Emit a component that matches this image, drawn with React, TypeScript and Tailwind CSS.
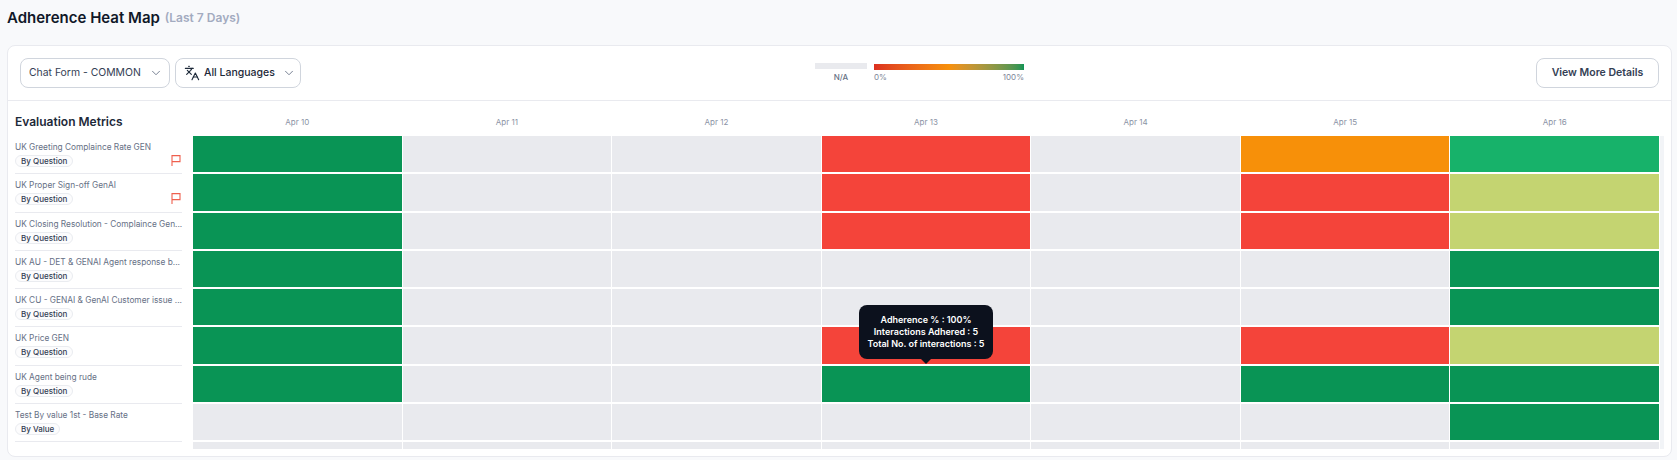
import { ChevronDown, Languages } from 'lucide-react'

type Cell = 'na' | 'green' | 'red' | 'orange' | 'lime' | 'mid'

const cellClass: Record<Cell, string> = {
  na: 'bg-[#e9eaee]',
  green: 'bg-[#099455]',
  red: 'bg-[#f4443a]',
  orange: 'bg-[#f79009]',
  lime: 'bg-[#c4d471]',
  mid: 'bg-[#17b26a]',
}

const dates = ['Apr 10', 'Apr 11', 'Apr 12', 'Apr 13', 'Apr 14', 'Apr 15', 'Apr 16']

const metrics: { name: string; tag: string; flag?: boolean; cells: Cell[] }[] = [
  { name: 'UK Greeting Complaince Rate GEN', tag: 'By Question', flag: true, cells: ['green', 'na', 'na', 'red', 'na', 'orange', 'mid'] },
  { name: 'UK Proper Sign-off GenAI', tag: 'By Question', flag: true, cells: ['green', 'na', 'na', 'red', 'na', 'red', 'lime'] },
  { name: 'UK Closing Resolution - Complaince Gen...', tag: 'By Question', cells: ['green', 'na', 'na', 'red', 'na', 'red', 'lime'] },
  { name: 'UK AU - DET & GENAI Agent response b...', tag: 'By Question', cells: ['green', 'na', 'na', 'na', 'na', 'na', 'green'] },
  { name: 'UK CU - GENAI & GenAI Customer issue ...', tag: 'By Question', cells: ['green', 'na', 'na', 'na', 'na', 'na', 'green'] },
  { name: 'UK Price GEN', tag: 'By Question', cells: ['green', 'na', 'na', 'red', 'na', 'red', 'lime'] },
  { name: 'UK Agent being rude', tag: 'By Question', cells: ['green', 'na', 'na', 'green', 'na', 'green', 'green'] },
  { name: 'Test By value 1st - Base Rate', tag: 'By Value', cells: ['na', 'na', 'na', 'na', 'na', 'na', 'green'] },
]

function FlagIcon() {
  return (
    <svg width="10" height="11" viewBox="0 0 10 11" fill="none" stroke="#ef5f4e" strokeWidth="1.1" className="mr-px -mt-px">
      <path d="M1 11V0.6H9V6.6H1" />
    </svg>
  )
}

export default function App() {
  return (
    <div className="h-[460px] w-full overflow-hidden bg-[#f8f9fb] pr-[5px] pl-[7px] font-['Inter',sans-serif] text-[#101828]">
      <div className="flex h-[45px] items-start gap-[5px] pt-[6px]">
        <h1 className="text-[15px] leading-6 font-semibold">Adherence Heat Map</h1>
        <span className="text-xs leading-6 font-semibold text-[#a3abc0]">(Last 7 Days)</span>
      </div>

      <div className="flex h-[412px] flex-col overflow-hidden rounded-lg border border-[#e9eaef] bg-white">
        <div className="relative flex h-[55px] shrink-0 items-center justify-between border-b border-[#e9eaef] px-3">
          <div className="flex items-center gap-[5px]">
            <button className="flex h-[30px] w-[150px] items-center justify-between rounded-lg border border-[#d0d5dd] pr-[6.5px] pl-2 text-[10.4px] whitespace-nowrap text-[#344054]">
              Chat Form - COMMON
              <ChevronDown className="h-3.5 w-3.5 text-[#667085]" strokeWidth={1.5} />
            </button>
            <button className="flex h-[30px] w-[126px] items-center justify-between rounded-lg border border-[#d0d5dd] pr-[4.5px] pl-2 text-[10.5px] font-medium whitespace-nowrap text-[#1d2939]">
              <span className="flex items-center gap-1">
                <Languages className="h-4 w-4" strokeWidth={1.7} />
                All Languages
              </span>
              <ChevronDown className="h-3.5 w-3.5 text-[#667085]" strokeWidth={1.5} />
            </button>
          </div>

          <div className="absolute top-[17px] left-[807px] flex gap-[7px]">
            <div className="flex w-[52px] flex-col items-center">
              <div className="h-1.5 w-full bg-[#e9eaee]" />
              <span className="mt-0.5 text-[8px] leading-3 font-medium text-[#667085]">N/A</span>
            </div>
            <div className="w-[150px] pt-px">
              <div className="h-1.5 w-full bg-linear-to-r from-[#dc2f1f] via-[#f79009] to-[#099455]" />
              <div className="mt-px flex justify-between text-[8px] leading-3 text-[#7d8699]">
                <span>0%</span>
                <span>100%</span>
              </div>
            </div>
          </div>

          <button className="flex h-[30px] w-[123px] items-center justify-center rounded-lg border border-[#d0d5dd] text-[10.5px] font-semibold whitespace-nowrap text-[#344054]">
            View More Details
          </button>
        </div>

        <div className="flex min-h-0 flex-1 pr-[7px] pl-[7px]">
          <div className="w-[167px] shrink-0">
            <div className="flex h-[35px] items-end pb-1 text-xs leading-5 font-semibold text-[#1d2939]">Evaluation Metrics</div>
            {metrics.map((m) => (
              <div key={m.name} className="flex h-[38.25px] flex-col gap-[2px] border-b border-[#e9eaef] pt-[5px]">
                <div className="text-[8.3px] leading-3 whitespace-nowrap text-[#667085]">{m.name}</div>
                <div className="flex items-center justify-between">
                  <span className="rounded-full border border-[#eaecf0] bg-[#fcfcfd] px-[5px] text-[8px] leading-[10px] font-medium text-[#344054]">{m.tag}</span>
                  {m.flag && <FlagIcon />}
                </div>
              </div>
            ))}
          </div>

          <div className="ml-[11px] flex min-w-0 flex-1 flex-col">
            <div className="flex h-[35px] shrink-0 gap-px pr-[5px]">
              {dates.map((d) => (
                <div key={d} className="flex flex-1 items-center justify-center pt-1.5 text-[8px] leading-3 text-[#8b93a5]">{d}</div>
              ))}
            </div>
            <div className="relative flex min-h-0 flex-1 gap-px">
              <div className="flex h-[313px] flex-1 flex-col gap-[2px] overflow-hidden">
                {metrics.map((m) => (
                  <div key={m.name} className="grid h-[36.25px] shrink-0 grid-cols-7 gap-px">
                    {m.cells.map((c, i) => (
                      <div key={i} className={cellClass[c]} />
                    ))}
                  </div>
                ))}
                <div className="grid h-[36.25px] shrink-0 grid-cols-7 gap-px">
                  {dates.map((d) => (
                    <div key={d} className={cellClass.na} />
                  ))}
                </div>
              </div>
              <div className="h-[313px] w-1 shrink-0 bg-[#f2f4f7]" />

              <div className="absolute top-[169px] left-[666px] flex h-[54px] w-[134px] flex-col items-center justify-center rounded-lg bg-[#0c111d] text-center text-[9px] leading-3 font-semibold text-white">
                <span>Adherence % : 100%</span>
                <span>Interactions Adhered : 5</span>
                <span>Total No. of interactions : 5</span>
                <div className="absolute -bottom-[5px] left-1/2 h-0 w-0 -translate-x-1/2 border-x-[5px] border-t-[5px] border-x-transparent border-t-[#0c111d]" />
              </div>
            </div>
          </div>
        </div>
      </div>
    </div>
  )
}
